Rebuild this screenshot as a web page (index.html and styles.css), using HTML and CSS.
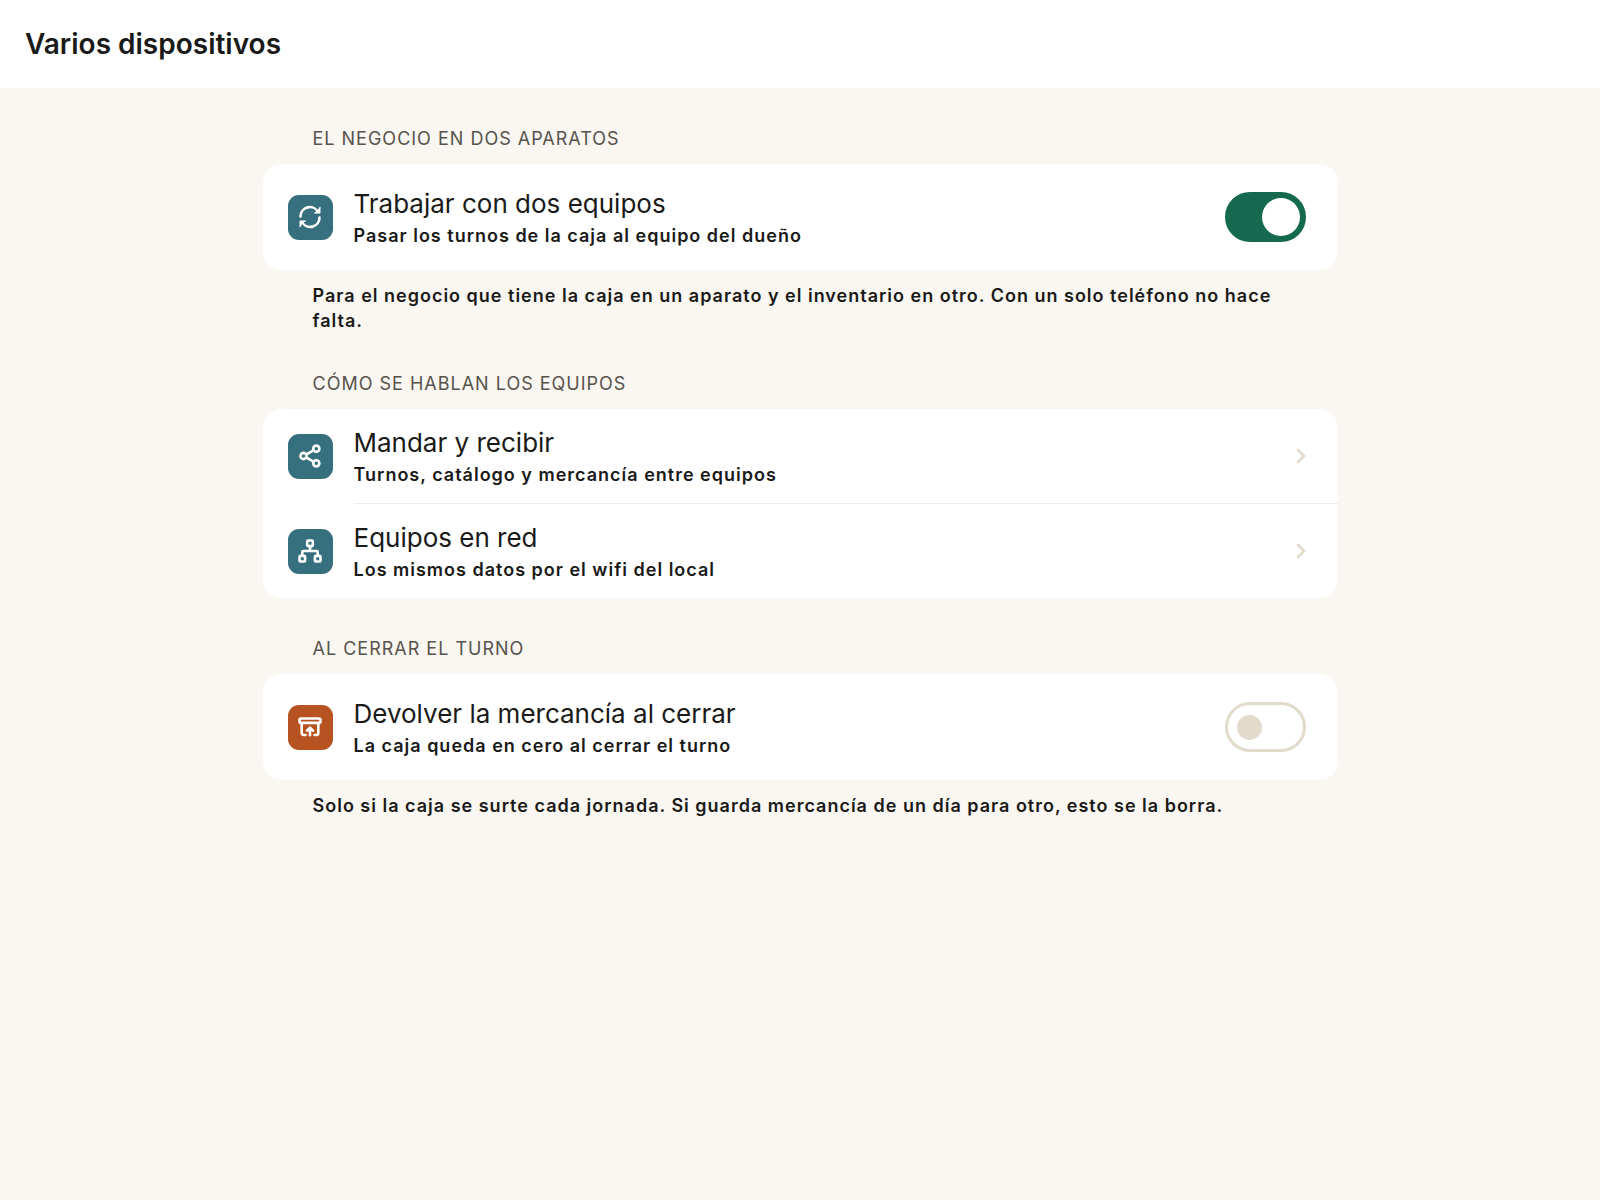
FILE: index.html
```
<!DOCTYPE html>
<html lang="es">
<head>
    <meta charset="UTF-8">
    <meta name="viewport" content="width=device-width, initial-scale=1.0">
    <title>Varios dispositivos</title>
    <link rel="stylesheet" href="styles.css">
</head>
<body>

    <header class="topbar">
        <h1>Varios dispositivos</h1>
    </header>

    <main class="content">
        <section class="group">
            <h2>EL NEGOCIO EN DOS APARATOS</h2>
            <div class="card">
                <div class="row row-switch">
                    <span class="icon">
                        <svg viewBox="0 0 24 24" aria-hidden="true">
                            <path d="M2.500 11.500A9.300 9.300 0 0 1 20 7M21.500 12.500A9.300 9.300 0 0 1 4 17"/>
                            <path class="solid" d="M22 2.500V8H16.500L19.500 6.500ZM2 21.500V16H7.500L4.500 17.500Z"/>
                        </svg>
                    </span>
                    <label class="texts" for="two-devices">
                        <span class="title">Trabajar con dos equipos</span>
                        <span class="subtitle">Pasar los turnos de la caja al equipo del dueño</span>
                    </label>
                    <input class="switch" type="checkbox" role="switch" id="two-devices" checked>
                </div>
            </div>
            <p class="note">Para el negocio que tiene la caja en un aparato y el inventario en otro. Con un solo teléfono no hace falta.</p>
        </section>

        <section class="group">
            <h2>CÓMO SE HABLAN LOS EQUIPOS</h2>
            <div class="card">
                <a class="row" href="#mandar">
                    <span class="icon">
                        <svg viewBox="0 0 24 24" aria-hidden="true">
                            <circle cx="5.500" cy="12" r="3.100"/>
                            <circle cx="18.300" cy="4.700" r="3.100"/>
                            <circle cx="18.300" cy="19.300" r="3.100"/>
                            <path d="M8.400 10.300L15.500 6.300M8.400 13.700L15.500 17.700"/>
                        </svg>
                    </span>
                    <span class="texts">
                        <span class="title">Mandar y recibir</span>
                        <span class="subtitle">Turnos, catálogo y mercancía entre equipos</span>
                    </span>
                    <svg class="chevron" viewBox="0 0 10 16" aria-hidden="true"><path d="M2 2L8 8L2 14"/></svg>
                </a>
                <a class="row" href="#red">
                    <span class="icon">
                        <svg viewBox="0 0 24 24" aria-hidden="true">
                            <rect x="9.200" y="1.500" width="5.600" height="5.600" rx="1"/>
                            <rect x="1.500" y="16.900" width="5.600" height="5.600" rx="1"/>
                            <rect x="16.900" y="16.900" width="5.600" height="5.600" rx="1"/>
                            <path d="M12 7V12M4.300 16.700V13A1 1 0 0 1 5.300 12H18.700A1 1 0 0 1 19.700 13V16.700"/>
                        </svg>
                    </span>
                    <span class="texts">
                        <span class="title">Equipos en red</span>
                        <span class="subtitle">Los mismos datos por el wifi del local</span>
                    </span>
                    <svg class="chevron" viewBox="0 0 10 16" aria-hidden="true"><path d="M2 2L8 8L2 14"/></svg>
                </a>
            </div>
        </section>

        <section class="group">
            <h2>AL CERRAR EL TURNO</h2>
            <div class="card">
                <div class="row row-switch">
                    <span class="icon icon-orange">
                        <svg viewBox="0 0 24 24" aria-hidden="true">
                            <rect x="1.500" y="3.500" width="21" height="4.400" rx="1.500"/>
                            <path d="M3.700 8V18A2 2 0 0 0 5.700 20H7.500M20.300 8V18A2 2 0 0 1 18.300 20H16.500M12 20.200V13M8.900 15.700L12 12.700L15.100 15.700"/>
                        </svg>
                    </span>
                    <label class="texts" for="return-stock">
                        <span class="title">Devolver la mercancía al cerrar</span>
                        <span class="subtitle">La caja queda en cero al cerrar el turno</span>
                    </label>
                    <input class="switch" type="checkbox" role="switch" id="return-stock">
                </div>
            </div>
            <p class="note">Solo si la caja se surte cada jornada. Si guarda mercancía de un día para otro, esto se la borra.</p>
        </section>
    </main>

</body>
</html>
```
FILE: styles.css
```
* {
    box-sizing: border-box;
}

body {
    margin: 0;
    font-family: Inter, "Liberation Sans", sans-serif;
    color: #1a1a18;
    background-color: #faf6f1;
}

.topbar {
    padding: 24px 25px;
    background-color: #fff;
}

h1 {
    margin: 0;
    font-size: 28px;
    font-weight: 600;
    line-height: 40px;
}

.content {
    display: flex;
    flex-direction: column;
    gap: 38px;
    max-width: 1075px;
    margin: 0 auto;
    padding: 38px 0;
}

h2 {
    margin: 0 0 12px;
    padding: 0 50px;
    font-size: 18px;
    font-weight: 400;
    line-height: 26px;
    letter-spacing: 1px;
    color: #57534c;
}

.card {
    overflow: hidden;
    border-radius: 19px;
    background-color: #fff;
}

.row {
    display: flex;
    align-items: center;
    gap: 21px;
    padding: 0 32px 0 25px;
    color: inherit;
    text-decoration: none;
}

.row-switch {
    padding-top: 6px;
    padding-bottom: 6px;
}

.icon {
    display: flex;
    align-items: center;
    justify-content: center;
    flex: none;
    width: 45px;
    height: 45px;
    border-radius: 11px;
    background-color: #366f7d;
}

.icon-orange {
    background-color: #b65320;
}

.icon svg {
    width: 24px;
    height: 24px;
    fill: none;
    stroke: #fff;
    stroke-width: 2.6;
    stroke-linecap: round;
    stroke-linejoin: round;
}

.icon .solid {
    fill: #fff;
    stroke-width: 1;
}

.texts {
    display: flex;
    flex-direction: column;
    flex: 1;
    padding: 16px 0 14px;
}

.title {
    font-size: 26px;
    line-height: 36px;
}

.subtitle {
    font-size: 18px;
    font-weight: 600;
    line-height: 28px;
    letter-spacing: 1px;
}

/* line starts under the text and runs to the card edge */
.row + .row {
    padding-top: 1px;
    background: linear-gradient(#efece8, #efece8) no-repeat 91px 0 / 100% 1px;
}

.chevron {
    flex: none;
    width: 10px;
    height: 16px;
    fill: none;
    stroke: #e2dacb;
    stroke-width: 2.6;
    stroke-linecap: round;
}

.switch {
    appearance: none;
    display: flex;
    align-items: center;
    flex: none;
    width: 81px;
    height: 50px;
    margin: 0;
    padding: 0 9px;
    border: 3px solid #e2dacb;
    border-radius: 25px;
    background-color: #fff;
    cursor: pointer;
}

.switch::before {
    content: "";
    width: 25px;
    height: 25px;
    border-radius: 50%;
    background-color: #e2dacb;
}

.switch:checked {
    justify-content: flex-end;
    padding: 0 3px;
    border-color: #15694f;
    background-color: #15694f;
}

.switch:checked::before {
    width: 38px;
    height: 38px;
    background-color: #fff;
}

.note {
    margin: 13px 0 0;
    padding: 0 50px;
    font-size: 18px;
    font-weight: 600;
    line-height: 25px;
    letter-spacing: 1px;
}
```
